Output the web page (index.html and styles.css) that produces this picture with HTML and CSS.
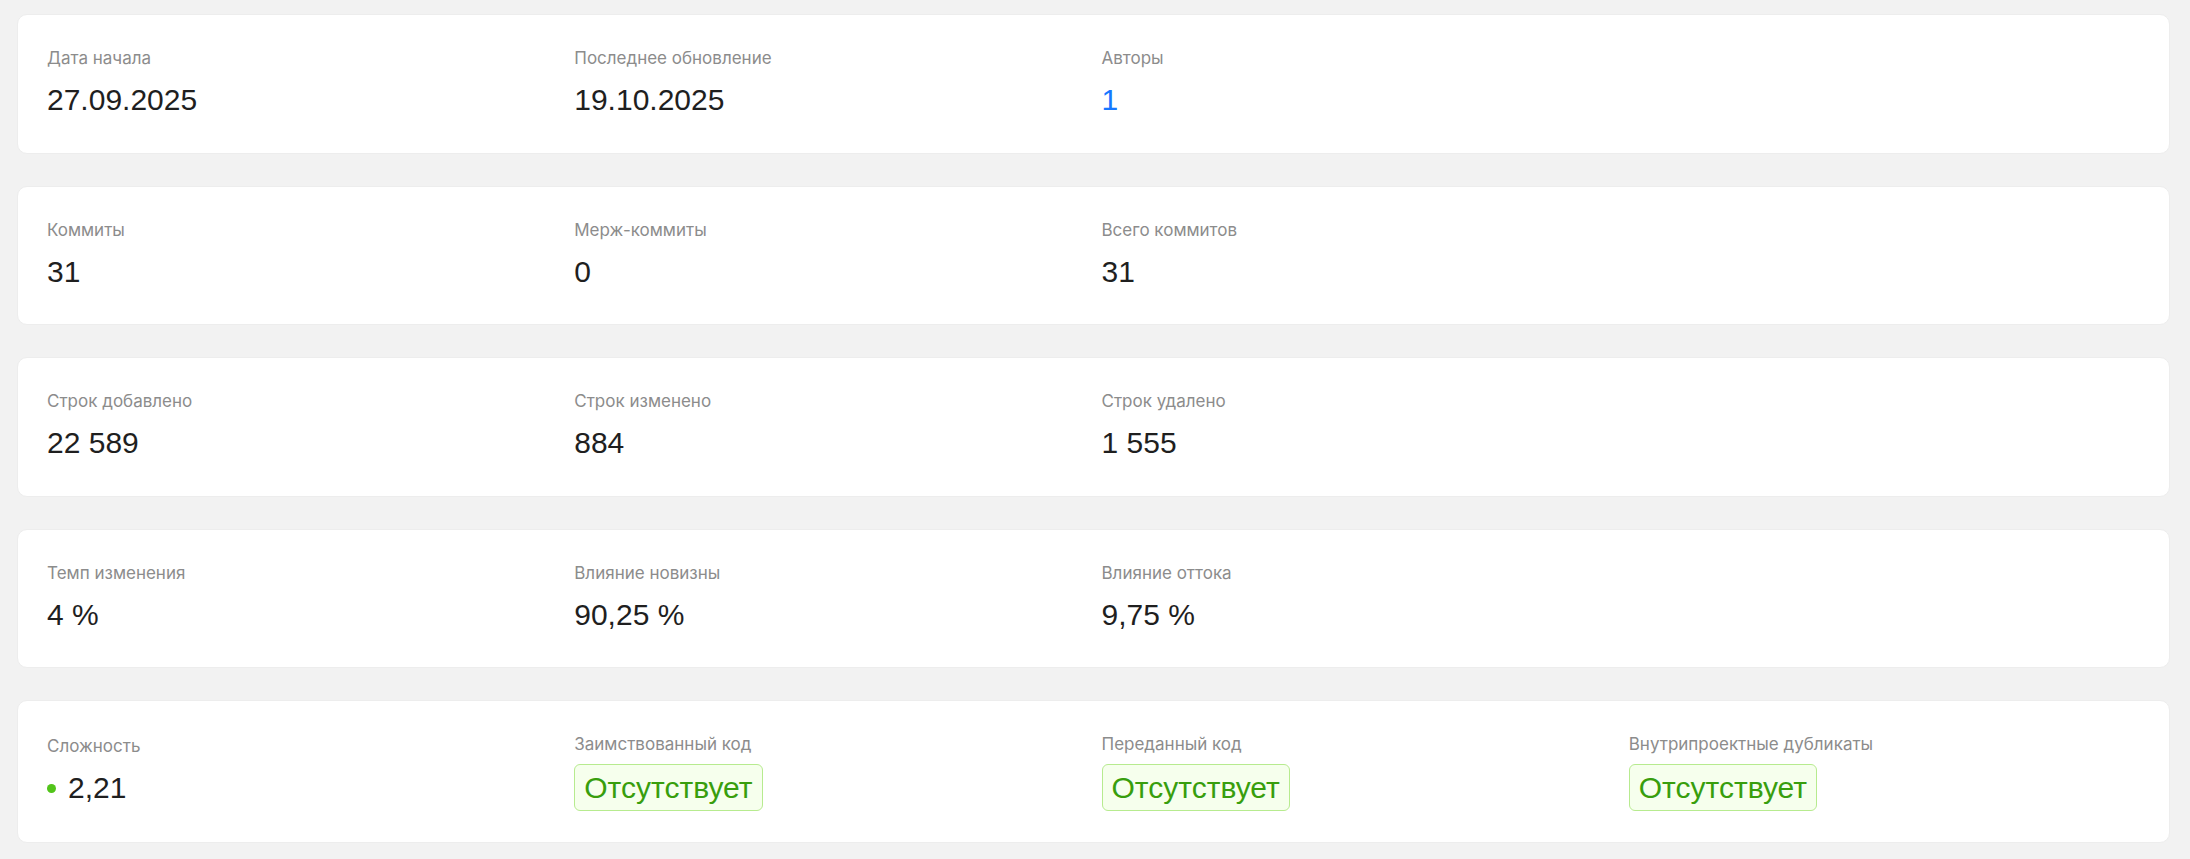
FILE: index.html
```html
<!DOCTYPE html>
<html lang="ru">
<head>
<meta charset="utf-8">
<title>Статистика</title>
<link rel="stylesheet" href="styles.css">
</head>
<body>
<main class="page">
  <section class="card">
    <div class="stat"><div class="label">Дата начала</div><div class="value">27.09.2025</div></div>
    <div class="stat"><div class="label">Последнее обновление</div><div class="value">19.10.2025</div></div>
    <div class="stat"><div class="label">Авторы</div><div class="value link">1</div></div>
  </section>
  <section class="card">
    <div class="stat"><div class="label">Коммиты</div><div class="value">31</div></div>
    <div class="stat"><div class="label">Мерж-коммиты</div><div class="value">0</div></div>
    <div class="stat"><div class="label">Всего коммитов</div><div class="value">31</div></div>
  </section>
  <section class="card">
    <div class="stat"><div class="label">Строк добавлено</div><div class="value">22 589</div></div>
    <div class="stat"><div class="label">Строк изменено</div><div class="value">884</div></div>
    <div class="stat"><div class="label">Строк удалено</div><div class="value">1 555</div></div>
  </section>
  <section class="card">
    <div class="stat"><div class="label">Темп изменения</div><div class="value">4 %</div></div>
    <div class="stat"><div class="label">Влияние новизны</div><div class="value">90,25 %</div></div>
    <div class="stat"><div class="label">Влияние оттока</div><div class="value">9,75 %</div></div>
  </section>
  <section class="card card-center">
    <div class="stat"><div class="label">Сложность</div><div class="value with-dot"><span class="dot"></span>2,21</div></div>
    <div class="stat"><div class="label">Заимствованный код</div><div class="value"><span class="tag">Отсутствует</span></div></div>
    <div class="stat"><div class="label">Переданный код</div><div class="value"><span class="tag">Отсутствует</span></div></div>
    <div class="stat"><div class="label">Внутрипроектные дубликаты</div><div class="value"><span class="tag">Отсутствует</span></div></div>
  </section>
</main>
</body>
</html>
```

FILE: styles.css
```css
* { box-sizing: border-box; }
html, body {
  margin: 0;
  background: #f2f2f2;
}
body {
  font-family: "Liberation Sans", Arial, sans-serif;
  color: #1f1f1f;
}
.page {
  display: flex;
  flex-direction: column;
  gap: 32px;
  padding: 14px 20px 14px 17px;
}
.card {
  background: #ffffff;
  border: 1px solid #ededed;
  border-radius: 10px;
  padding: 31px 29px 30.5px;
  display: grid;
  grid-template-columns: repeat(4, 1fr);
  column-gap: 16px;
  align-items: start;
}
.card-center { align-items: center; }
.label {
  font-family: Inter, "Liberation Sans", sans-serif;
  font-size: 17px;
  line-height: 24px;
  color: #8c8c8c;
}
.value {
  margin-top: 8px;
  font-size: 30px;
  line-height: 44px;
  color: #1f1f1f;
}
.value.link { color: #1677ff; }
.with-dot {
  display: flex;
  align-items: center;
}
.dot {
  width: 9px;
  height: 9px;
  border-radius: 50%;
  background: #52c41a;
  margin: 2px 12px 0 0;
}
.tag {
  display: inline-block;
  font-size: 30px;
  line-height: 45px;
  padding: 0 9px;
  color: #389e0d;
  background: #f6ffed;
  border: 1px solid #b7eb8f;
  border-radius: 6px;
  vertical-align: top;
}
.value:has(.tag) { line-height: 0; }
```
